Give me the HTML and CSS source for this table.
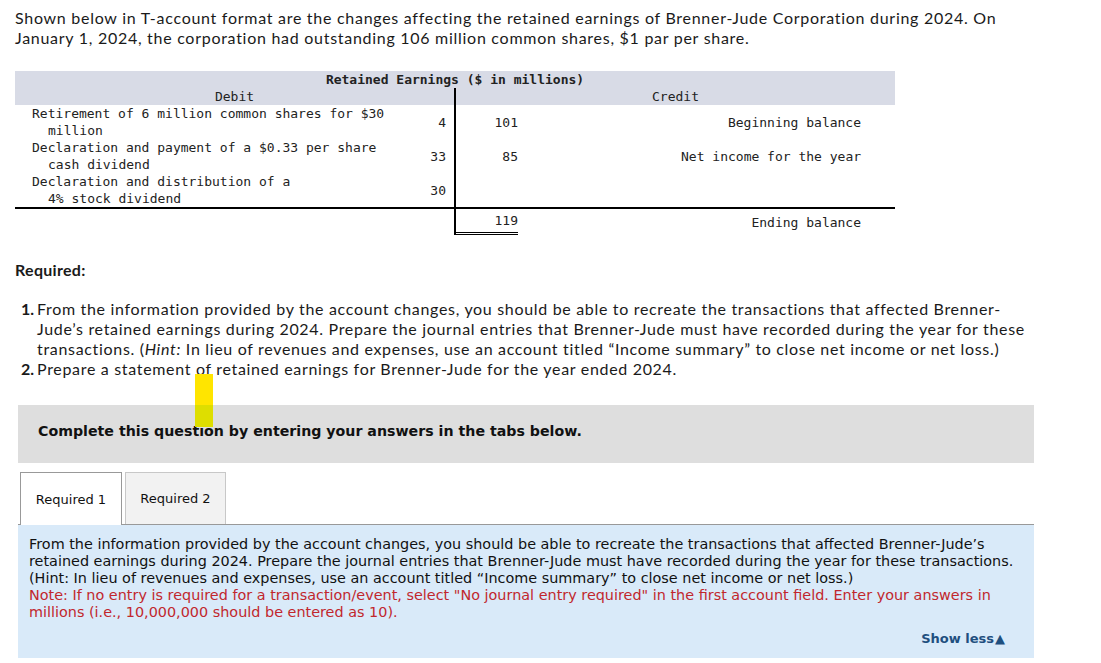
FILE: index.html
```html
<!DOCTYPE html>
<html>
<head>
<meta charset="utf-8">
<link rel="stylesheet" href="styles.css">
</head>
<body>
<p class="intro">Shown below in T-account format are the changes affecting the retained earnings of Brenner-Jude Corporation during 2024. On<br>January 1, 2024, the corporation had outstanding 106 million common shares, $1 par per share.</p>

<table class="taccount">
  <colgroup>
    <col class="c-desc"><col class="c-damt"><col class="c-camt"><col class="c-clabel">
  </colgroup>
  <thead>
    <tr><th colspan="4" class="title">Retained Earnings ($ in millions)</th></tr>
    <tr><th colspan="2" class="side debit">Debit</th><th colspan="2" class="side">Credit</th></tr>
  </thead>
  <tbody>
    <tr>
      <td class="desc">Retirement of 6 million common shares for $30<br>million</td>
      <td class="damt">4</td>
      <td class="camt">101</td>
      <td class="clabel">Beginning balance</td>
    </tr>
    <tr>
      <td class="desc">Declaration and payment of a $0.33 per share<br>cash dividend</td>
      <td class="damt">33</td>
      <td class="camt">85</td>
      <td class="clabel">Net income for the year</td>
    </tr>
    <tr class="last">
      <td class="desc">Declaration and distribution of a<br>4% stock dividend</td>
      <td class="damt">30</td>
      <td class="camt"></td>
      <td class="clabel"></td>
    </tr>
    <tr class="total">
      <td class="desc"></td>
      <td class="damt"></td>
      <td class="camt">119</td>
      <td class="clabel">Ending balance</td>
    </tr>
  </tbody>
</table>

<h3 class="required">Required:</h3>
<ol class="reqlist">
  <li><span class="num">1.</span><span class="txt">From the information provided by the account changes, you should be able to recreate the transactions that affected Brenner-<br>Jude’s retained earnings during 2024. Prepare the journal entries that Brenner-Jude must have recorded during the year for these<br>transactions. (<i>Hint:</i> In lieu of revenues and expenses, use an account titled “Income summary” to close net income or net loss.)</span></li>
  <li><span class="num">2.</span><span class="txt">Prepare a statement of retained earnings for Brenner-Jude for the year ended 2024.</span></li>
</ol>

<div class="instruct">Complete this question by entering your answers in the tabs below.</div>

<div class="tabs">
  <div class="tab active">Required 1</div>
  <div class="tab">Required 2</div>
</div>
<div class="panel">
  <p class="ptext">From the information provided by the account changes, you should be able to recreate the transactions that affected Brenner-Jude’s<br>retained earnings during 2024. Prepare the journal entries that Brenner-Jude must have recorded during the year for these transactions.<br>(Hint: In lieu of revenues and expenses, use an account titled “Income summary” to close net income or net loss.)<br><span class="note">Note: If no entry is required for a transaction/event, select "No journal entry required" in the first account field. Enter your answers in<br>millions (i.e., 10,000,000 should be entered as 10).</span></p>
  <div class="showless">Show less<span class="tri">▲</span></div>
</div>

<div class="marker"></div>
</body>
</html>
```

FILE: styles.css
```css
html, body { margin: 0; padding: 0; background: #fff; }
body {
  position: relative;
  padding: 0 15px;
  color: #1a1a1a;
  font-family: Lato, "Open Sans", sans-serif;
}
.intro {
  margin: 8px 0 0;
  font-size: 16px;
  line-height: 20px;
  letter-spacing: 0.72px;
  white-space: nowrap;
}
.taccount {
  margin-top: 23px;
  width: 880px;
  border-collapse: separate;
  border-spacing: 0;
  table-layout: fixed;
  font-family: "DejaVu Sans Mono", "Liberation Mono", monospace;
  font-size: 13px;
  line-height: 17px;
  color: #222;
}
.c-desc { width: 405px; }
.c-damt { width: 36px; }
.c-camt { width: 62px; }
.c-clabel { width: 377px; }
.taccount th, .taccount td { padding: 0; font-weight: normal; }
.taccount thead th { background: #d8dbe6; }
.taccount th.title { font-weight: bold; text-align: center; height: 17px; }
.taccount th.side { text-align: center; height: 17px; }
.taccount th.debit { border-right: 2px solid #000; }
.taccount td { height: 34px; vertical-align: middle; white-space: nowrap; }
.taccount td.desc { padding-left: 33px; text-indent: -16px; }
.taccount td.damt { text-align: right; padding-right: 8px; border-right: 2px solid #000; }
.taccount td.camt { text-align: right; }
.taccount td.clabel { text-align: right; padding-right: 34px; }
.taccount tr.last td { border-bottom: 2px solid #000; }
.taccount tr.total td { height: 23px; }
.taccount tr.total td.camt { border-bottom: 3px double #000; vertical-align: top; padding-top: 3px; height: 20px; }
.taccount tr.total td.clabel { vertical-align: top; padding-top: 5px; height: 18px; }

.required {
  margin: 25px 0 0;
  font-size: 16px;
  line-height: 20px;
  font-weight: bold;
  letter-spacing: 0.3px;
}
.reqlist {
  list-style: none;
  margin: 19px 0 0;
  padding: 0;
  font-size: 16px;
  line-height: 20px;
  letter-spacing: 0.68px;
}
.reqlist li { display: flex; }
.reqlist .num { width: 19px; margin-right: 3px; font-weight: bold; flex: none; text-align: right; letter-spacing: 0; }
.reqlist .txt { white-space: nowrap; }

.instruct {
  margin: 26px 0 0 3px;
  width: 1016px;
  height: 58px;
  box-sizing: border-box;
  padding: 0 20px 7px;
  display: flex;
  align-items: center;
  background: #dedede;
  font-family: "DejaVu Sans", Verdana, sans-serif;
  font-weight: bold;
  font-size: 14.2px;
  color: #111;
}
.tabs {
  display: flex;
  gap: 3px;
  margin: 9px 0 0 5px;
  position: relative;
  z-index: 1;
}
.tab {
  width: 99px;
  height: 51px;
  display: flex;
  align-items: center;
  justify-content: center;
  border: 1px solid #c8c8c8;
  border-bottom: none;
  background: #f2f2f2;
  font-family: "DejaVu Sans", Verdana, sans-serif;
  font-size: 13px;
  color: #111;
}
.tab.active {
  background: #fff;
  border-color: #999;
  height: 52px;
  margin-bottom: -1px;
  width: 100px;
}
.panel {
  margin-left: 3px;
  width: 1016px;
  height: 134px;
  box-sizing: border-box;
  border-top: 1px solid #999;
  background: #d9eaf9;
  padding: 11px 29px 0 11px;
  font-family: "DejaVu Sans", Verdana, sans-serif;
  font-size: 14.4px;
  line-height: 17px;
  color: #111;
}
.ptext { margin: 0; white-space: nowrap; }
.note { color: #c1272d; }
.showless {
  margin-top: 9px;
  text-align: right;
  font-weight: bold;
  color: #1f4f7f;
  font-size: 13px;
}
.tri { font-size: 13px; margin-left: 1px; }
.marker {
  position: absolute;
  left: 195px;
  top: 374px;
  width: 18px;
  height: 53px;
  background: linear-gradient(#ffe500 0, #ffe500 31px, #dede00 31px, #dede00 53px);
}
```
